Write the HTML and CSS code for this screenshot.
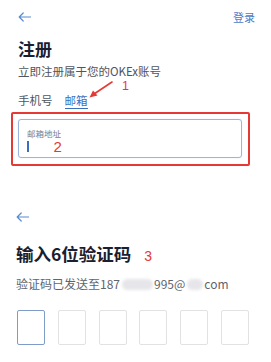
FILE: index.html
```html
<!DOCTYPE html>
<html lang="zh">
<head>
<meta charset="utf-8">
<link rel="stylesheet" href="styles.css">
</head>
<body>
<div class="screen">
  <section class="register">
    <header class="topbar">
      <svg class="back" viewBox="0 0 13 10" width="13" height="10"><path d="M12.5 5H1.2M5.2 1L1.2 5L5.2 9" fill="none" stroke="#5b8bd0" stroke-width="1.2" stroke-linecap="round" stroke-linejoin="round"/></svg>
      <span class="login">登录</span>
    </header>
    <h1 class="title">注册</h1>
    <p class="sub">立即注册属于您的OKEx账号</p>
    <div class="tabs">
      <span class="tab">手机号</span>
      <span class="tab active">邮箱</span>
      <svg class="anno-arrow" viewBox="0 0 26 18" width="26" height="18"><path d="M24 1L6 13" stroke="#e53935" stroke-width="1.6" fill="none" stroke-linecap="round"/><path d="M1.5 16.5L5 9.5L9.5 14.5Z" fill="#e53935"/></svg>
      <span class="anno anno-1">1</span>
    </div>
    <div class="highlight">
      <div class="field">
        <div class="label">邮箱地址</div>
        <div class="inputline"><span class="caret"></span><span class="anno anno-2">2</span></div>
      </div>
    </div>
  </section>
  <section class="verify">
    <div class="topbar2">
      <svg class="back" viewBox="0 0 13 10" width="13" height="10"><path d="M12.5 5H1.2M5.2 1L1.2 5L5.2 9" fill="none" stroke="#5b8bd0" stroke-width="1.2" stroke-linecap="round" stroke-linejoin="round"/></svg>
    </div>
    <h2 class="title2">输入6位验证码<span class="anno anno-3">3</span></h2>
    <p class="sent">验证码已发送至187<span class="blur b1"></span>995@<span class="blur b2"></span>com</p>
    <div class="codes">
      <span class="code current"></span>
      <span class="code"></span>
      <span class="code"></span>
      <span class="code"></span>
      <span class="code"></span>
      <span class="code"></span>
    </div>
  </section>
</div>
</body>
</html>
```
FILE: styles.css
```css
* { box-sizing: border-box; margin: 0; padding: 0; }
body {
  margin: 0;
  background: #ffffff;
  font-family: "Noto Sans CJK SC", "Noto Sans", sans-serif;
  color: #1c2033;
}
.screen { width: 271px; height: 362px; overflow: hidden; background: #fff; }

.register { padding: 0 16px 0 18px; }
.topbar {
  height: 34px;
  display: flex;
  align-items: center;
  justify-content: space-between;
}
.back { display: block; }
.login { font-size: 11px; line-height: 14px; color: #4d7cc4; }

.title {
  margin-top: 4px;
  font-size: 17px;
  line-height: 21px;
  font-weight: 700;
  color: #1a1e30;
}
.sub {
  margin-top: 6px;
  font-size: 11.5px;
  line-height: 13px;
  color: #50545e;
}
.tabs {
  position: relative;
  margin-top: 15px;
  display: flex;
  gap: 12px;
  height: 16px;
}
.tab {
  font-size: 11.5px;
  line-height: 14px;
  color: #50545e;
}
.tab.active {
  color: #3a6fc0;
  border-bottom: 1.5px solid #3a6fc0;
  height: 16px;
}
.anno { color: #e53935; font-family: "Liberation Sans", "Noto Sans", sans-serif; }
.anno-arrow { position: absolute; left: 70px; top: -12px; }
.anno-1 { position: absolute; left: 104px; top: -12px; font-size: 12.5px; line-height: 11px; }

.highlight {
  margin: 3px 5px 0 -7px;
  border: 2px solid #e53935;
  border-radius: 2px;
  padding: 5px 6px 6px 5px;
}
.field {
  height: 39px;
  border: 1px solid #9ab6de;
  border-radius: 3px;
  padding: 8px 8px 0 8px;
  box-shadow: 0 0 1px rgba(90,130,200,.3);
}
.label { font-size: 8.5px; line-height: 10px; color: #7a7e88; }
.inputline { display: flex; align-items: center; height: 13px; margin-top: 2px; gap: 25px; }
.caret { width: 1.5px; height: 11px; background: #3a6fc0; }
.anno-2 { font-size: 15px; line-height: 13px; }

.verify { padding: 0 16px; margin-top: 43px; }
.topbar2 { height: 16px; display: flex; align-items: center; }
.title2 {
  margin-top: 18px;
  font-size: 17.5px;
  line-height: 22px;
  font-weight: 700;
  color: #1a1e30;
}
.anno-3 { font-size: 14px; font-weight: 400; margin-left: 13px; }
.sent {
  margin-top: 10px;
  font-size: 12px;
  line-height: 14px;
  color: #60646e;
  display: flex;
  align-items: center;
  white-space: nowrap;
}
.blur {
  display: inline-block;
  height: 11px;
  border-radius: 6px;
  background: #e6e6ea;
  filter: blur(1.5px);
}
.b1 { width: 31px; margin: 0 1px 0 2px; }
.b2 { width: 16px; margin: 0 1px 0 2px; }
.codes {
  margin: 19px 0 0 1px;
  display: grid;
  grid-template-columns: repeat(6, 28px);
  column-gap: 12.8px;
}
.code {
  height: 35px;
  border: 1px solid #e2e2e4;
  border-radius: 2px;
}
.code.current { border: 1.5px solid #7f9cc8; }
```
